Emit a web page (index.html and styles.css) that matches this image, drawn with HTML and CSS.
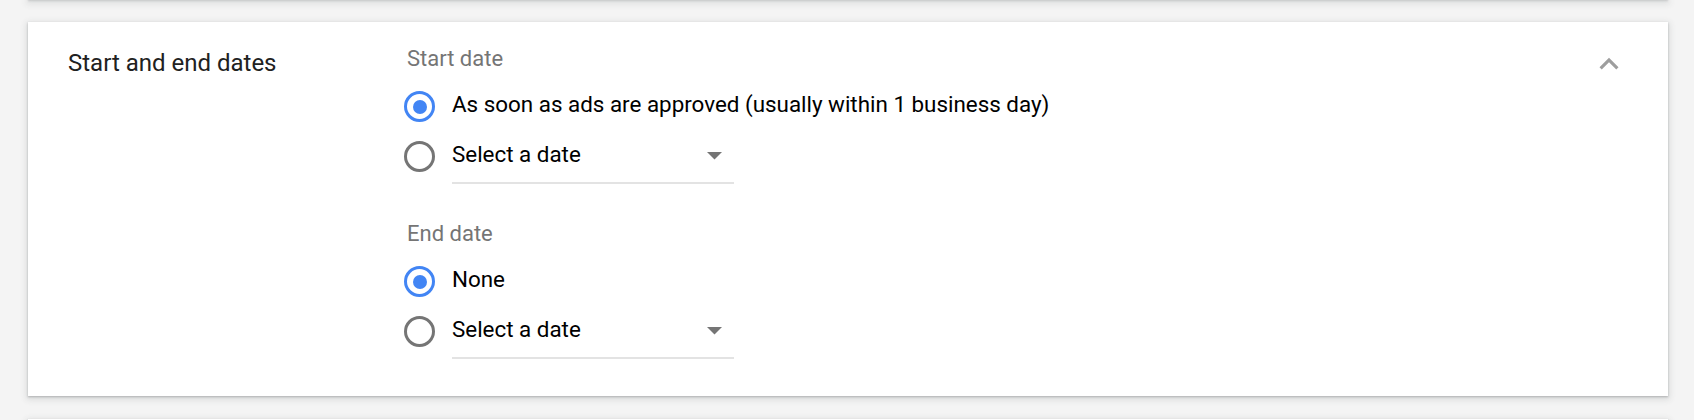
FILE: index.html
```html
<!DOCTYPE html>
<html lang="en">
<head>
<meta charset="utf-8">
<title>Start and end dates</title>
<link rel="stylesheet" href="styles.css">
</head>
<body>
<div class="stub stub-top"></div>
<section class="card">
  <h2 class="card-title">Start and end dates</h2>
  <div class="options">
    <div class="group">
      <div class="group-label">Start date</div>
      <div class="row">
        <span class="radio checked"></span>
        <span class="row-text">As soon as ads are approved (usually within 1 business day)</span>
      </div>
      <div class="row row-select">
        <span class="radio"></span>
        <div class="select">
          <span class="row-text">Select a date</span>
          <svg class="caret" width="15" height="8" viewBox="0 0 15 8"><polygon points="0,0 15,0 7.5,7.5" fill="#757575"/></svg>
        </div>
      </div>
    </div>
    <div class="group group-end">
      <div class="group-label">End date</div>
      <div class="row">
        <span class="radio checked"></span>
        <span class="row-text">None</span>
      </div>
      <div class="row row-select">
        <span class="radio"></span>
        <div class="select">
          <span class="row-text">Select a date</span>
          <svg class="caret" width="15" height="8" viewBox="0 0 15 8"><polygon points="0,0 15,0 7.5,7.5" fill="#757575"/></svg>
        </div>
      </div>
    </div>
  </div>
  <svg class="collapse" width="38" height="38" viewBox="0 0 24 24"><path d="M12 8l-6 6 1.41 1.41L12 10.83l4.59 4.58L18 14z" fill="#9e9e9e"/></svg>
</section>
<div class="stub stub-bottom"></div>
</body>
</html>
```
FILE: styles.css
```css
html, body {
  margin: 0;
  padding: 0;
  background: #f4f4f4;
  font-family: Roboto, "Liberation Sans", Arial, sans-serif;
  overflow: hidden;
}
.stub {
  background: #fff;
  margin-left: 28px;
  margin-right: 26px;
  box-shadow: 0 1px 2px 0 rgba(60, 64, 67, 0.3), 0 2px 6px 2px rgba(60, 64, 67, 0.12);
}
.stub-top {
  height: 1px;
  margin-top: -1px;
}
.stub-bottom {
  height: 20px;
  margin-top: 23px;
}
.card {
  display: flex;
  align-items: flex-start;
  margin: 22px 26px 0 28px;
  padding: 0 0 0 40px;
  background: #fff;
  box-shadow: 0 1px 2px 0 rgba(60, 64, 67, 0.3), 0 2px 6px 2px rgba(60, 64, 67, 0.12);
}
.card-title {
  width: 336px;
  flex: none;
  margin: 25px 0 0;
  font-size: 24px;
  line-height: 32px;
  font-weight: 400;
  color: #212121;
}
.options {
  padding: 23px 0 37px;
}
.group-end {
  margin-top: 36px;
}
.group-label {
  font-size: 22px;
  line-height: 28px;
  color: #757575;
  margin: 0 0 8px 3px;
}
.row {
  display: flex;
  align-items: flex-start;
  height: 50px;
}
.row-select {
  height: 53px;
}
.radio {
  flex: none;
  box-sizing: border-box;
  width: 31px;
  height: 31px;
  margin-top: 10px;
  border: 3px solid #757575;
  border-radius: 50%;
  display: flex;
  align-items: center;
  justify-content: center;
}
.radio.checked {
  border-color: #4285f4;
}
.radio.checked::after {
  content: "";
  width: 14px;
  height: 14px;
  border-radius: 50%;
  background: #4285f4;
}
.row-text {
  margin-left: 17px;
  font-size: 22.4px;
  line-height: 46px;
  color: #000;
  white-space: nowrap;
}
.select {
  display: flex;
  justify-content: space-between;
  align-items: flex-start;
  margin-left: 17px;
  width: 282px;
  height: 51px;
  border-bottom: 2px solid #e3e3e3;
}
.select .row-text {
  margin-left: 0;
}
.caret {
  margin: 21px 12px 0 0;
}
.collapse {
  flex: none;
  margin: 23px 40px 0 auto;
}
```
